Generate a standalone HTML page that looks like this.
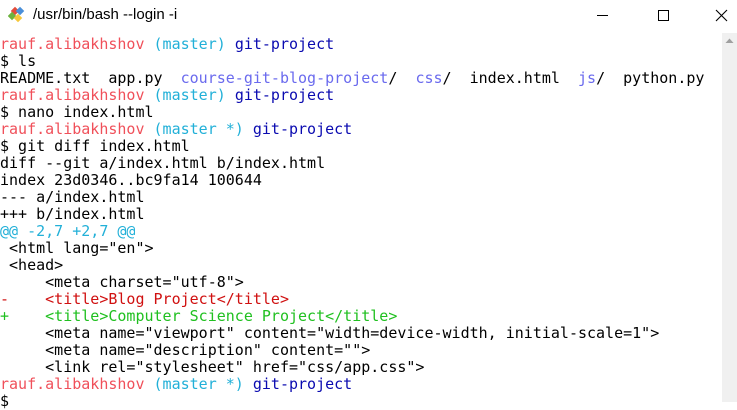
<!DOCTYPE html>
<html><head><meta charset="utf-8"><style>
html,body{margin:0;padding:0;width:737px;height:402px;overflow:hidden;background:#fff;}
.tb{position:absolute;left:0;top:0;width:737px;height:32px;background:#fff;font-family:"Liberation Sans",sans-serif;font-size:15px;color:#000;}
.tb .t{position:absolute;left:33px;top:6px;}
.sb{position:absolute;left:722px;top:33px;width:15px;height:369px;background:#f0f0f0;}
pre{position:absolute;left:0;top:36px;margin:0;font-family:"DejaVu Sans Mono","Liberation Mono",monospace;font-size:15px;line-height:17px;color:#000;}
.r{color:#f0505a}.c{color:#22b0d8}.b{color:#0a0ab0}.p{color:#6a6aee}.d{color:#d01010}.g{color:#20c020}
</style></head><body>
<div class="tb">
<svg style="position:absolute;left:8px;top:6px" width="20" height="18" viewBox="0 0 20 18">
<rect x="4" y="2" width="6" height="6" fill="#e24c3b" transform="rotate(45 7 5)"/>
<rect x="9" y="2" width="6" height="6" fill="#4a8fd9" transform="rotate(45 12 5)"/>
<rect x="1" y="7" width="6" height="6" fill="#6db33f" transform="rotate(45 4 10)"/>
<rect x="7" y="9" width="6" height="6" fill="#f5c73a" transform="rotate(45 10 12)"/>
</svg>
<span class="t">/usr/bin/bash --login -i</span>
<svg style="position:absolute;left:590px;top:8px" width="140" height="16">
<line x1="7" y1="7.5" x2="18" y2="7.5" stroke="#000" stroke-width="1"/>
<rect x="648.5" y="2.5" width="10" height="10" fill="none" stroke="#000" transform="translate(-580 0)"/>
<path d="M126 2 L137 13 M137 2 L126 13" stroke="#000" stroke-width="1.1"/>
</svg>
</div>
<div class="sb"><svg width="15" height="15"><path d="M3.5 10 L7.5 5.5 L11.5 10 Z" fill="#a0a0a0"/></svg></div>
<pre><span class="r">rauf.alibakhshov</span> <span class="c">(master)</span> <span class="b">git-project</span>
$ ls
README.txt  app.py  <span class="p">course-git-blog-project</span>/  <span class="p">css</span>/  index.html  <span class="p">js</span>/  python.py
<span class="r">rauf.alibakhshov</span> <span class="c">(master)</span> <span class="b">git-project</span>
$ nano index.html
<span class="r">rauf.alibakhshov</span> <span class="c">(master *)</span> <span class="b">git-project</span>
$ git diff index.html
diff --git a/index.html b/index.html
index 23d0346..bc9fa14 100644
--- a/index.html
+++ b/index.html
<span class="c">@@ -2,7 +2,7 @@</span>
 &lt;html lang="en"&gt;
 &lt;head&gt;
     &lt;meta charset="utf-8"&gt;
<span class="d">-    &lt;title&gt;Blog Project&lt;/title&gt;</span>
<span class="g">+    &lt;title&gt;Computer Science Project&lt;/title&gt;</span>
     &lt;meta name="viewport" content="width=device-width, initial-scale=1"&gt;
     &lt;meta name="description" content=""&gt;
     &lt;link rel="stylesheet" href="css/app.css"&gt;
<span class="r">rauf.alibakhshov</span> <span class="c">(master *)</span> <span class="b">git-project</span>
$
</pre>
</body></html>
